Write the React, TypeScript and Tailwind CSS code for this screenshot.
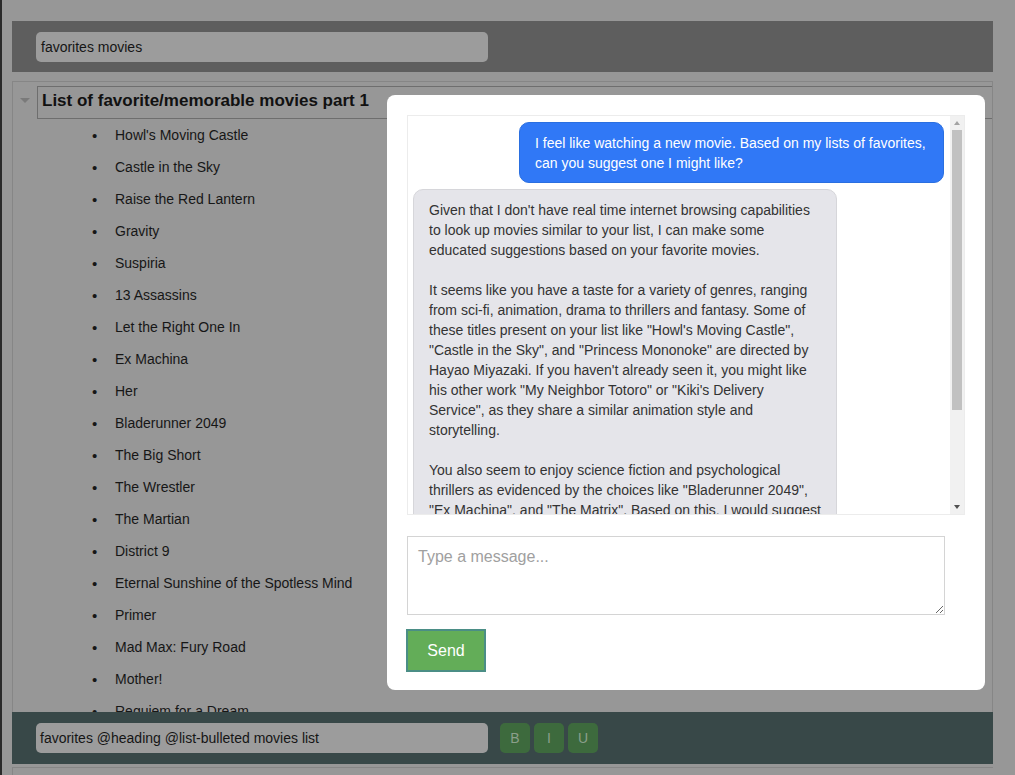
const movies = [
  "Howl's Moving Castle",
  "Castle in the Sky",
  "Raise the Red Lantern",
  "Gravity",
  "Suspiria",
  "13 Assassins",
  "Let the Right One In",
  "Ex Machina",
  "Her",
  "Bladerunner 2049",
  "The Big Short",
  "The Wrestler",
  "The Martian",
  "District 9",
  "Eternal Sunshine of the Spotless Mind",
  "Primer",
  "Mad Max: Fury Road",
  "Mother!",
  "Requiem for a Dream",
]

const reply = `Given that I don't have real time internet browsing capabilities to look up movies similar to your list, I can make some educated suggestions based on your favorite movies.

It seems like you have a taste for a variety of genres, ranging from sci-fi, animation, drama to thrillers and fantasy. Some of these titles present on your list like "Howl's Moving Castle", "Castle in the Sky", and "Princess Mononoke" are directed by Hayao Miyazaki. If you haven't already seen it, you might like his other work "My Neighbor Totoro" or "Kiki's Delivery Service", as they share a similar animation style and storytelling.

You also seem to enjoy science fiction and psychological thrillers as evidenced by the choices like "Bladerunner 2049", "Ex Machina", and "The Matrix". Based on this, I would suggest "Arrival" directed by Denis Villeneuve.`

export default function App() {
  return (
    <div className="relative w-[1015px] h-[775px] overflow-hidden bg-[#979797] flex font-['Liberation_Sans',Arial,sans-serif]">
      {/* edge of the window behind */}
      <div className="w-[2px] h-full shrink-0 bg-[#2a2a2a]" />

      <div className="flex flex-col pl-[10px] pt-[21px] w-[991px] shrink-0">
        {/* top bar */}
        <div className="h-[51px] shrink-0 bg-[#5e5e5e] pl-[24px] pt-[11px]">
          <div className="w-[452px] h-[30px] rounded-[5px] bg-[#9c9c9c] px-[5px] text-[14px] leading-[30px] text-[#151515]">
            favorites movies
          </div>
        </div>

        {/* document panel */}
        <div className="mt-[9px] h-[631px] shrink-0 border border-[#868686] border-b-0 overflow-hidden">
          <div className="flex items-start pt-[4px]">
            <div className="w-[24px] pt-[12px] flex justify-center">
              <div className="w-0 h-0 border-l-[5px] border-r-[5px] border-t-[5px] border-l-transparent border-r-transparent border-t-[#7a7a7a]" />
            </div>
            <div className="flex-1 h-[33px] border border-[#6e6e6e] border-r-0 pl-[4px] text-[17px] font-bold leading-[28px] text-[#111]">
              List of favorite/memorable movies part 1
            </div>
          </div>
          <ul className="pl-[79px]">
            {movies.map((m) => (
              <li key={m} className="flex h-[32px] items-center text-[14px] text-[#161616]">
                <span className="w-[23px] text-[15px] leading-none">•</span>
                <span>{m}</span>
              </li>
            ))}
          </ul>
        </div>

        {/* bottom bar */}
        <div className="h-[52px] shrink-0 bg-[#384848] flex items-center pl-[24px] gap-[12px]">
          <div className="w-[452px] h-[30px] rounded-[5px] bg-[#9c9c9c] px-[4px] text-[14px] leading-[30px] text-[#151515]">
            favorites @heading @list-bulleted movies list
          </div>
          <div className="flex gap-[4px]">
            {["B", "I", "U"].map((b) => (
              <div
                key={b}
                className="w-[30px] h-[30px] rounded-[5px] bg-[#3d6a3d] text-[#8b9f8b] text-[14px] flex items-center justify-center"
              >
                {b}
              </div>
            ))}
          </div>
        </div>
        <div className="mt-[3px] shrink-0 border-t border-l border-[#868686] h-[10px]" />
      </div>

      {/* chat dialog */}
      <div className="absolute left-[387px] top-[95px] w-[598px] h-[595px] bg-white rounded-[8px] px-[20px] pt-[20px] flex flex-col">
        <div className="relative h-[400px] shrink-0 border border-[#ececec] flex overflow-hidden">
          <div className="flex-1 flex flex-col gap-[6px] pl-[5px] pr-[6px] pt-[6px] text-[14px] leading-[20px]">
            <div className="self-end w-[425px] rounded-[10px] border border-[#2a6fe0] bg-[#3078f6] px-[15px] pt-[10px] pb-[9px] text-white">
              I feel like watching a new movie. Based on my lists of favorites, can you suggest one I might like?
            </div>
            <div className="self-start w-[424px] rounded-[10px] border border-[#d6d6da] bg-[#e5e5ea] px-[15px] pt-[10px] pb-[9px] text-[#333] whitespace-pre-wrap">
              {reply}
            </div>
          </div>
          {/* scrollbar */}
          <div className="w-[14px] bg-[#f1f1f1] flex flex-col items-center">
            <div className="h-[14px] flex items-center justify-center">
              <div className="w-0 h-0 border-l-[3px] border-r-[3px] border-b-[4px] border-l-transparent border-r-transparent border-b-[#a3a3a3]" />
            </div>
            <div className="w-[10px] h-[280px] bg-[#c1c1c1]" />
            <div className="flex-1" />
            <div className="h-[14px] flex items-center justify-center">
              <div className="w-0 h-0 border-l-[3px] border-r-[3px] border-t-[4px] border-l-transparent border-r-transparent border-t-[#505050]" />
            </div>
          </div>
        </div>

        <textarea
          placeholder="Type a message..."
          className="mt-[21px] shrink-0 w-[538px] h-[79px] border border-[#d4d4d4] px-[10px] py-[8px] text-[16px] leading-[24px] placeholder:text-[#a0a0a0] resize-y outline-none"
        />

        <div className="mt-[14px] shrink-0">
          <button className="w-[80px] h-[43px] bg-[#63ad58] border-2 border-[#4b8e86] text-white text-[16px] -ml-[1px]">
            Send
          </button>
        </div>
      </div>
    </div>
  )
}
